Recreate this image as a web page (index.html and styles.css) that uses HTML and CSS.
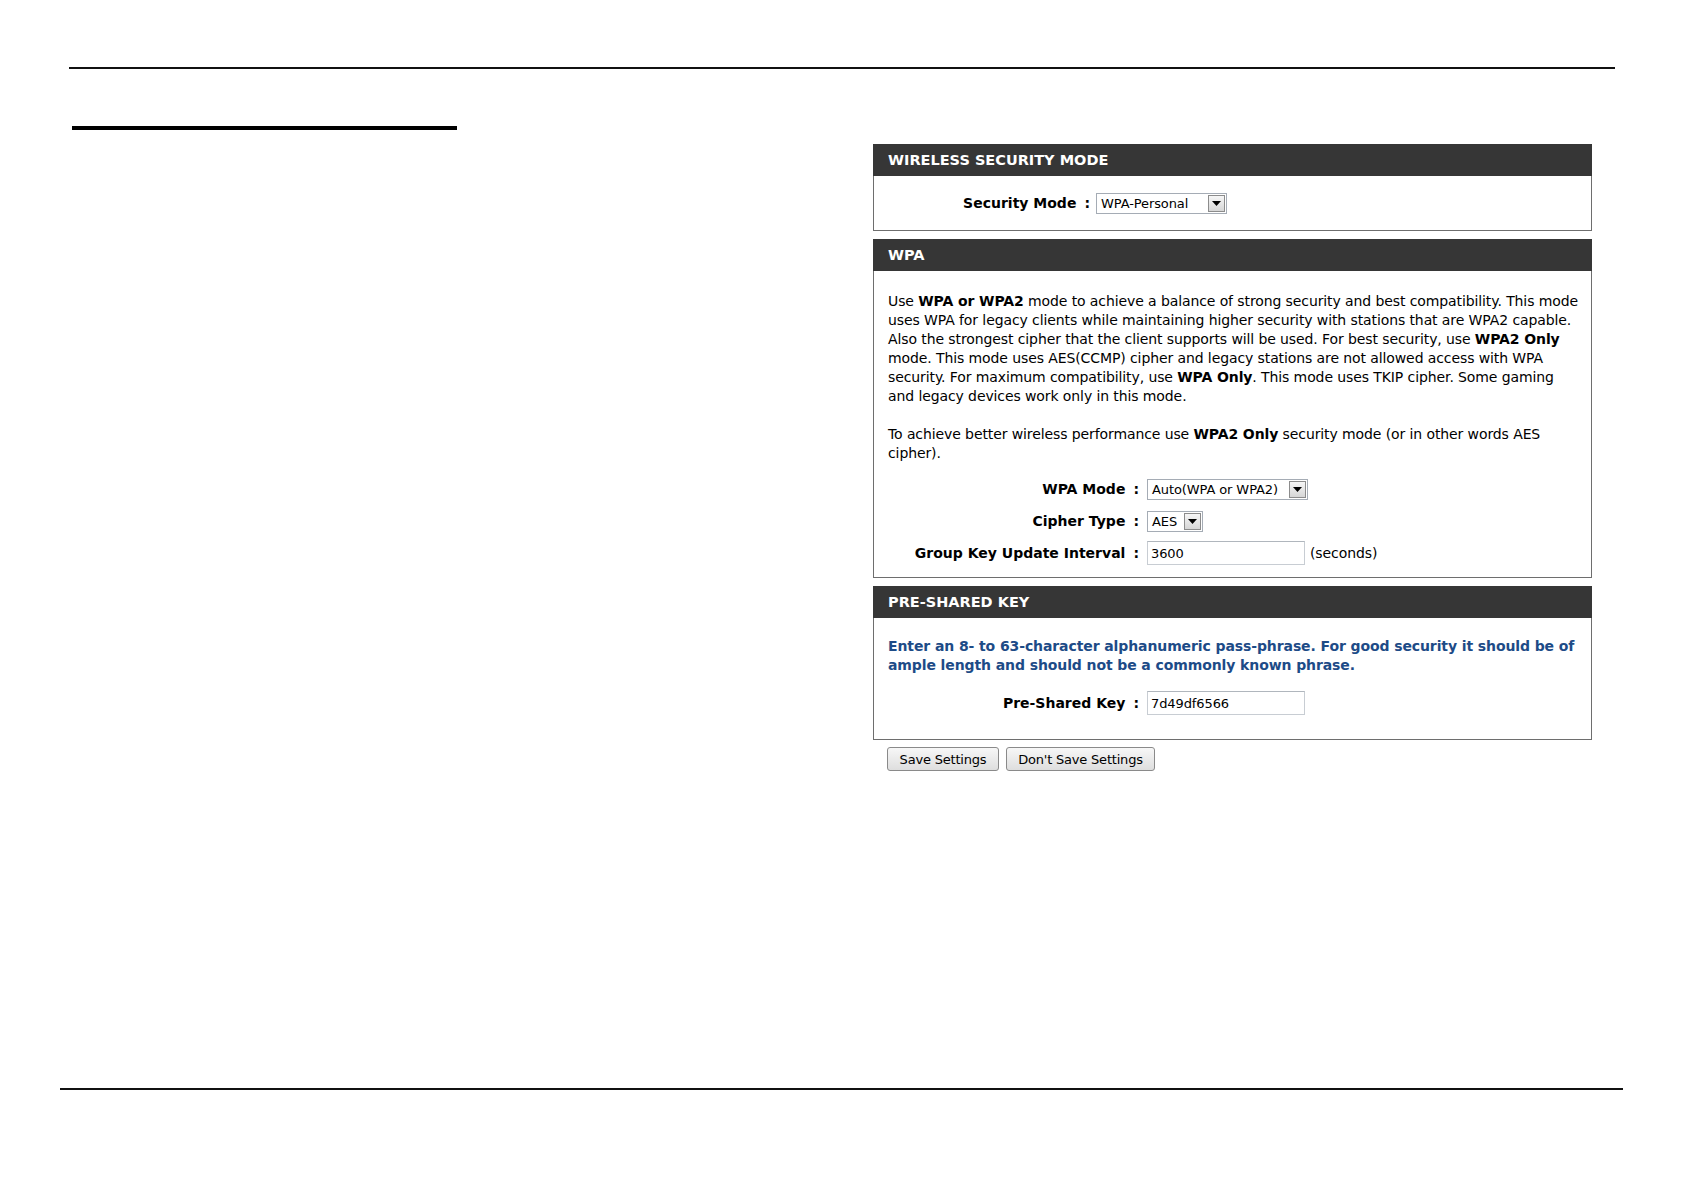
FILE: index.html
```html
<!DOCTYPE html>
<html>
<head>
<meta charset="utf-8">
<title>Wireless Security</title>
<link rel="stylesheet" href="styles.css">
</head>
<body>
<div class="page">
  <div class="rule-top"></div>
  <div class="rule-title"></div>
  <div class="panels">
    <section class="panel">
      <h2 class="panel-head">WIRELESS SECURITY MODE</h2>
      <div class="panel-body body-mode">
        <div class="form form-mode">
          <label class="label">Security Mode<span class="colon">:</span></label>
          <div class="select sel-mode"><span class="sel-text">WPA-Personal</span><span class="sel-btn"><svg width="9" height="5" viewBox="0 0 9 5"><path d="M0 0H9L4.5 5Z" fill="#000"/></svg></span></div>
        </div>
      </div>
    </section>

    <section class="panel">
      <h2 class="panel-head">WPA</h2>
      <div class="panel-body body-wpa">
        <p class="text">Use <b>WPA or WPA2</b> mode to achieve a balance of strong security and best compatibility. This mode<br>uses WPA for legacy clients while maintaining higher security with stations that are WPA2 capable.<br>Also the strongest cipher that the client supports will be used. For best security, use <b>WPA2 Only</b><br>mode. This mode uses AES(CCMP) cipher and legacy stations are not allowed access with WPA<br>security. For maximum compatibility, use <b>WPA Only</b>. This mode uses TKIP cipher. Some gaming<br>and legacy devices work only in this mode.</p>
        <p class="text text-last">To achieve better wireless performance use <b>WPA2 Only</b> security mode (or in other words AES<br>cipher).</p>
        <div class="form form-wpa">
          <label class="label">WPA Mode<span class="colon">:</span></label>
          <div class="select sel-wpa"><span class="sel-text">Auto(WPA or WPA2)</span><span class="sel-btn"><svg width="9" height="5" viewBox="0 0 9 5"><path d="M0 0H9L4.5 5Z" fill="#000"/></svg></span></div>
          <label class="label">Cipher Type<span class="colon">:</span></label>
          <div class="select sel-cipher"><span class="sel-text">AES</span><span class="sel-btn"><svg width="9" height="5" viewBox="0 0 9 5"><path d="M0 0H9L4.5 5Z" fill="#000"/></svg></span></div>
          <label class="label">Group Key Update Interval<span class="colon">:</span></label>
          <div class="ctrl"><span class="input">3600</span><span class="unit">(seconds)</span></div>
        </div>
      </div>
    </section>

    <section class="panel">
      <h2 class="panel-head">PRE-SHARED KEY</h2>
      <div class="panel-body body-psk">
        <p class="note">Enter an 8- to 63-character alphanumeric pass-phrase. For good security it should be of<br>ample length and should not be a commonly known phrase.</p>
        <div class="form form-wpa">
          <label class="label">Pre-Shared Key<span class="colon">:</span></label>
          <div class="ctrl"><span class="input">7d49df6566</span></div>
        </div>
      </div>
    </section>

    <div class="buttons">
      <button class="btn btn-save">Save Settings</button>
      <button class="btn btn-nosave">Don't Save Settings</button>
    </div>
  </div>
  <div class="rule-bottom"></div>
</div>
</body>
</html>
```

FILE: styles.css
```css
html, body {
  margin: 0;
  padding: 0;
  background: #fff;
}
.page {
  display: flex;
  flex-direction: column;
  height: 1191px;
  box-sizing: border-box;
  padding-top: 67px;
  font-family: "DejaVu Sans", Verdana, sans-serif;
  color: #000;
}
.rule-top {
  margin-left: 69px;
  width: 1546px;
  height: 2px;
  background: #111;
}
.rule-title {
  margin-top: 57px;
  margin-left: 72px;
  width: 385px;
  height: 4px;
  background: #000;
}
.panels {
  margin-top: 14px;
  margin-left: 873px;
  width: 719px;
  display: flex;
  flex-direction: column;
  gap: 8px;
}
.panel {
  border: 1px solid #6e6e6e;
  border-top: 0;
}
.panel-head {
  margin: 0 -1px;
  height: 32px;
  background: #363636;
  color: #fff;
  font-size: 14.5px;
  font-weight: bold;
  letter-spacing: 0;
  line-height: 33px;
  padding-left: 15px;
}
.panel-body {
  padding: 0 0 0 14px;
}
.body-mode {
  padding-top: 11px;
  padding-bottom: 11px;
}
.body-wpa {
  padding-top: 21px;
  padding-bottom: 8px;
}
.body-psk {
  padding-top: 19px;
  padding-bottom: 20px;
}
.text {
  margin: 0 0 19px;
  font-size: 14px;
  letter-spacing: -0.1px;
  line-height: 19px;
  white-space: nowrap;
}
.text-last {
  margin-bottom: 10px;
}
.note {
  margin: 0 0 12px;
  font-size: 14px;
  font-weight: bold;
  letter-spacing: -0.1px;
  line-height: 19px;
  color: #1d4b87;
  white-space: nowrap;
}
.form {
  display: grid;
  align-items: center;
  column-gap: 8px;
  grid-auto-rows: 32px;
}
.form-mode {
  grid-template-columns: 202px auto;
  column-gap: 6px;
}
.form-wpa {
  grid-template-columns: 251px auto;
}
.label {
  text-align: right;
  font-size: 14px;
  font-weight: bold;
  letter-spacing: 0;
  white-space: nowrap;
}
.colon {
  margin-left: 8px;
}
.select {
  display: inline-flex;
  align-items: center;
  justify-self: start;
  box-sizing: border-box;
  height: 21px;
  border: 1px solid #a5acb5;
  background: #fff;
  padding: 1px;
}
.sel-text {
  flex: 1;
  font-size: 13px;
  letter-spacing: -0.1px;
  padding-left: 3px;
  line-height: 17px;
  white-space: nowrap;
}
.sel-btn {
  width: 17px;
  height: 17px;
  box-sizing: border-box;
  border: 1px solid #8c8c8c;
  background: linear-gradient(#f6f6f6, #d6d6d6);
  display: flex;
  align-items: center;
  justify-content: center;
}
.sel-mode { width: 131px; }
.sel-wpa { width: 161px; }
.sel-cipher { width: 56px; }
.ctrl {
  display: flex;
  align-items: center;
  gap: 5px;
}
.input {
  box-sizing: border-box;
  width: 158px;
  height: 24px;
  border: 1px solid #c8cdd3;
  border-top-color: #b0b6bd;
  font-size: 13px;
  letter-spacing: -0.1px;
  line-height: 22px;
  padding: 1px 3px 0;
}
.unit {
  font-size: 14px;
  letter-spacing: -0.1px;
}
.buttons {
  display: flex;
  gap: 7px;
  padding-left: 14px;
  margin-top: -1px;
}
.btn {
  height: 24px;
  box-sizing: border-box;
  border: 1px solid #8a8a8a;
  border-radius: 3px;
  background: linear-gradient(#f7f7f7, #dedede);
  font-family: "DejaVu Sans", Verdana, sans-serif;
  font-size: 13px;
  letter-spacing: -0.2px;
  color: #000;
  padding: 0;
}
.btn-save { width: 112px; }
.btn-nosave { width: 149px; }
.rule-bottom {
  margin-top: auto;
  margin-bottom: 101px;
  margin-left: 60px;
  width: 1563px;
  height: 2px;
  background: #111;
}
```
